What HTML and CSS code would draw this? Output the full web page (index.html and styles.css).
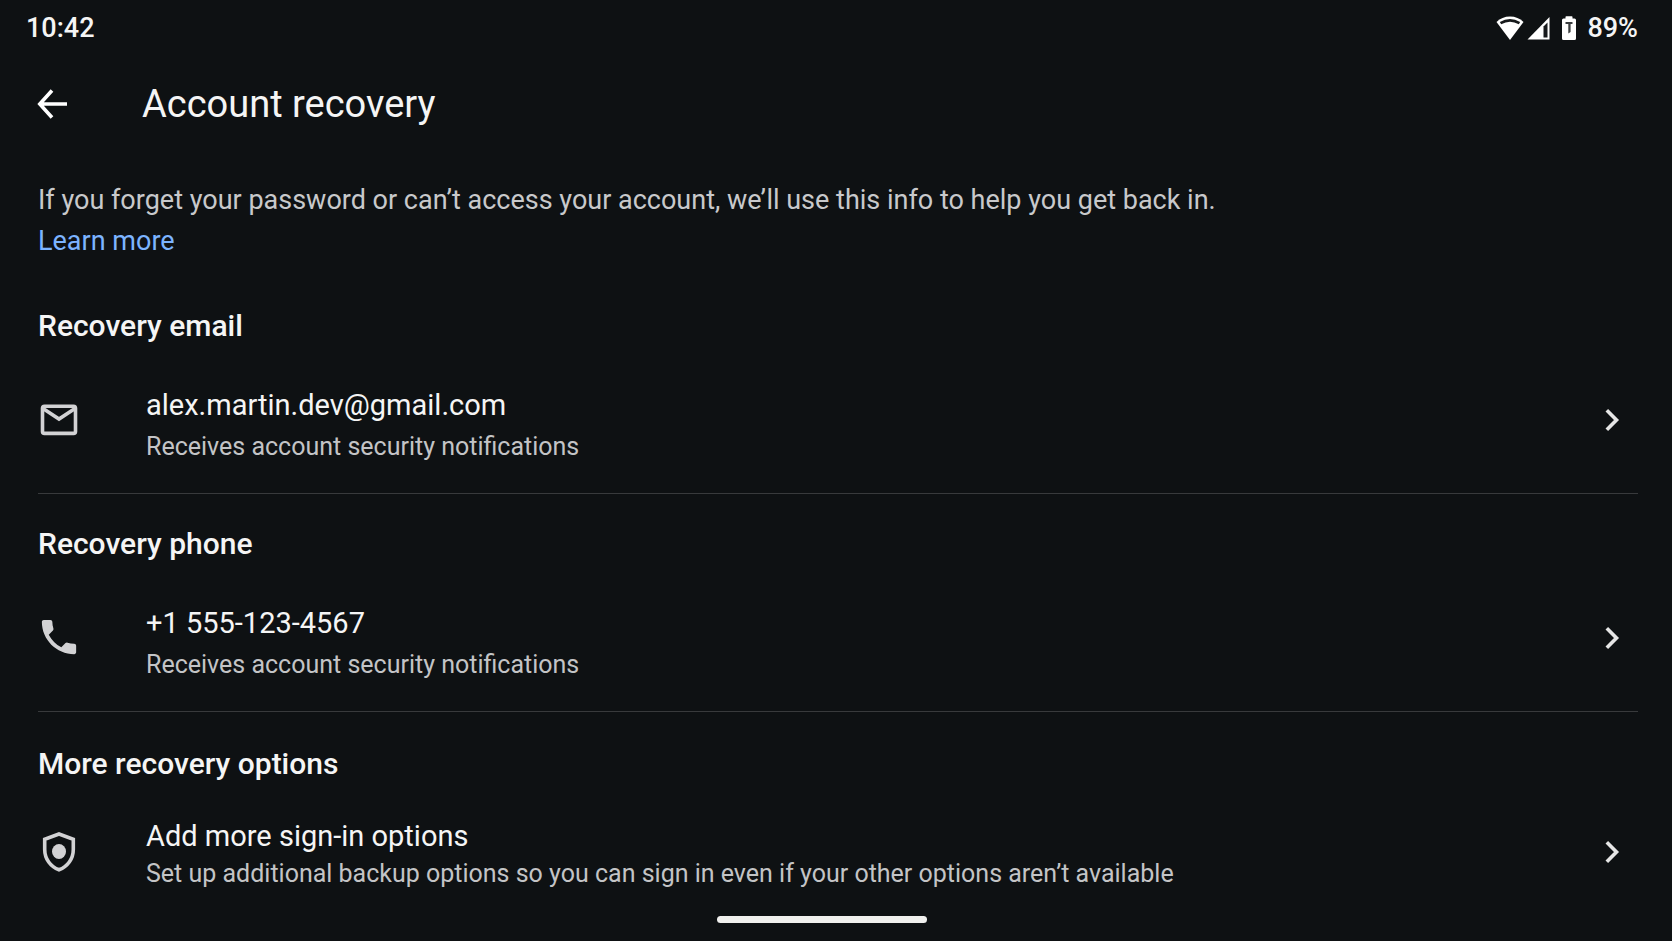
FILE: index.html
```html
<!DOCTYPE html>
<html lang="en">
<head>
<meta charset="utf-8">
<meta name="viewport" content="width=device-width, initial-scale=1">
<title>Account recovery</title>
<link rel="stylesheet" href="styles.css">
</head>
<body>
<div class="screen">
  <div class="status">
    <time class="status-time">10:42</time>
    <div class="status-icons">
      <svg class="wifi" width="28" height="24" viewBox="0 0 28 24" aria-hidden="true"><path d="M14 24 0.5 6Q6 0.5 14 0.5T27.500 6Z" fill="#fff"/><path d="M4.500 7.200Q14 1.500 23.500 7.200" fill="none" stroke="#16191b" stroke-width="2.600"/></svg>
      <svg class="signal" width="24" height="24" viewBox="0 0 24 24" aria-hidden="true"><path d="M0.500 23.500 22.500 1V23.500Z" fill="#fff"/><path d="M16.500 10.500 20.500 6.500V21.500H16.500Z" fill="#16191b"/></svg>
      <svg class="battery" width="14" height="24" viewBox="0 0 14 24" aria-hidden="true"><path d="M3.500 2.500V1Q3.500.3 4.200.3H9.800Q10.500.3 10.500 1V2.500H12.500Q14 2.500 14 4V22.500Q14 24 12.500 24H1.500Q0 24 0 22.500V4Q0 2.500 1.500 2.500Z" fill="#fff"/><path d="M3.500 6H10.500V8H8.600V16L6.300 17.500V8H3.500Z" fill="#3a3d3f"/></svg>
      <span>89%</span>
    </div>
  </div>

  <header class="appbar">
    <button class="back" type="button" aria-label="Back">
      <svg width="32" height="32" viewBox="0 0 32 32" aria-hidden="true"><path d="M16 2.500 3.800 16 16 29.500M4 16H31" fill="none" stroke="#fff" stroke-width="3.600"/></svg>
    </button>
    <h1>Account recovery</h1>
  </header>

  <main>
    <p class="intro">If you forget your password or can’t access your account, we’ll use this info to help you get back in.<br><a href="#learn">Learn more</a></p>

    <section class="group">
      <h2>Recovery email</h2>
      <button class="row" type="button">
        <span class="icon"><svg width="40" height="40" viewBox="0 0 40 40" aria-hidden="true"><rect x="3.500" y="6.200" width="33" height="27.200" rx="2" fill="none" stroke="#d2d2d4" stroke-width="3.600"/><path d="M4 8.500 20 19 36 8.500" fill="none" stroke="#d2d2d4" stroke-width="3.600"/></svg></span>
        <span class="text"><span class="label">alex.martin.dev@gmail.com</span><span class="detail">Receives account security notifications</span></span>
        <span class="chevron"><svg width="16" height="24" viewBox="0 0 16 24" aria-hidden="true"><path d="M2.800 2.200 12.500 12 2.800 21.800" fill="none" stroke="#e6e6e6" stroke-width="3.600"/></svg></span>
      </button>
    </section>

    <section class="group">
      <h2>Recovery phone</h2>
      <button class="row" type="button">
        <span class="icon"><svg width="40" height="40" viewBox="1.500 2 21 21" aria-hidden="true"><path d="M6.620 10.790c1.440 2.830 3.760 5.140 6.590 6.590l2.200-2.200c.270-.270.670-.360 1.020-.240 1.120.370 2.330.570 3.570.570.550 0 1 .450 1 1V20c0 .550-.450 1-1 1C10.610 21 3 13.390 3 4c0-.550.450-1 1-1h3.500c.550 0 1 .450 1 1 0 1.250.200 2.450.570 3.570.110.350.030.740-.250 1.020z" fill="#d2d2d4"/></svg></span>
        <span class="text"><span class="label">+1 555-123-4567</span><span class="detail">Receives account security notifications</span></span>
        <span class="chevron"><svg width="16" height="24" viewBox="0 0 16 24" aria-hidden="true"><path d="M2.800 2.200 12.500 12 2.800 21.800" fill="none" stroke="#e6e6e6" stroke-width="3.600"/></svg></span>
      </button>
    </section>

    <section class="group">
      <h2>More recovery options</h2>
      <button class="row compact" type="button">
        <span class="icon"><svg width="40" height="40" viewBox="0 0 40 40" aria-hidden="true"><path d="M20 2 34.300 7.300V17.500C34.300 27 28.500 34.500 20 37.800 11.500 34.500 5.700 27 5.700 17.500V7.300Z" fill="none" stroke="#d2d2d4" stroke-width="3.600"/><ellipse cx="20" cy="19.500" rx="7" ry="7.600" fill="#d2d2d4"/></svg></span>
        <span class="text"><span class="label">Add more sign-in options</span><span class="detail">Set up additional backup options so you can sign in even if your other options aren’t available</span></span>
        <span class="chevron"><svg width="16" height="24" viewBox="0 0 16 24" aria-hidden="true"><path d="M2.800 2.200 12.500 12 2.800 21.800" fill="none" stroke="#e6e6e6" stroke-width="3.600"/></svg></span>
      </button>
    </section>
  </main>

  <footer class="navbar"><div class="handle"></div></footer>
</div>
</body>
</html>
```
FILE: styles.css
```css
* {
  box-sizing: border-box;
}

body {
  margin: 0;
  background: #0e1113;
  color: #f5f5f5;
  font-family: Roboto, "Liberation Sans", sans-serif;
}

h1,
h2,
p {
  margin: 0;
}

button {
  padding: 0;
  border: 0;
  background: none;
  color: inherit;
  font: inherit;
  text-align: left;
  cursor: pointer;
}

svg {
  display: block;
}

.screen {
  display: flex;
  flex-direction: column;
  min-height: 100vh;
}

.status {
  display: flex;
  align-items: center;
  justify-content: space-between;
  height: 55px;
  padding: 0 34px 0 26px;
  font-size: 27px;
  font-weight: 500;
}

.status-icons {
  display: flex;
  align-items: center;
}

.signal {
  margin-left: 3px;
}

.battery {
  margin: 0 11px;
}

.appbar {
  display: flex;
  align-items: center;
  gap: 74px;
  height: 97px;
  padding: 0 36px;
}

h1 {
  font-size: 38px;
  font-weight: 400;
  line-height: 48px;
}

main {
  flex: 1;
  padding: 28px 34px 0 38px;
}

.intro {
  color: #c8c9cb;
  font-size: 27px;
  line-height: 41px;
}

.intro a {
  color: #7cb4ff;
  text-decoration: none;
}

.group {
  padding: 30px 0 26px;
  border-bottom: 1px solid #383a3c;
}

.group:first-of-type {
  padding-top: 44px;
}

.group:last-of-type {
  padding: 32px 0 0;
  border-bottom: 0;
}

h2 {
  margin-bottom: 39px;
  font-size: 30px;
  font-weight: 500;
  line-height: 40px;
}

.row {
  display: flex;
  align-items: flex-start;
  width: 100%;
  line-height: 41px;
}

.compact {
  line-height: 38px;
}

.group:last-of-type h2 {
  margin-bottom: 33px;
}

.icon,
.chevron {
  display: flex;
  align-items: center;
  height: 69px;
}

.icon {
  width: 108px;
  padding-left: 1px;
}

.text {
  display: flex;
  flex: 1;
  flex-direction: column;
}

.label {
  font-size: 29px;
}

.detail {
  color: #c3c4c6;
  font-size: 25px;
}

.chevron {
  padding-right: 18px;
}

.navbar {
  display: flex;
  justify-content: center;
  padding: 0 28px 18px 0;
}

.handle {
  width: 210px;
  height: 7px;
  border-radius: 4px;
  background: #f0f0ee;
}
```
